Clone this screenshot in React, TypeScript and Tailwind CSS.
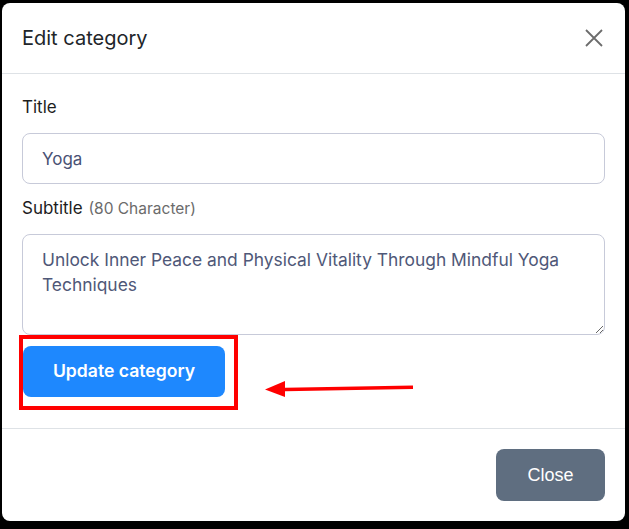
import React from "react";

export default function App() {
  return (
    <div className="w-[629px] h-[529px] bg-black pt-[3px] pl-[2px]" style={{ fontFamily: "Inter, 'Noto Sans', sans-serif" }}>
      <div className="relative w-[623px] h-[518px] bg-white rounded-[8px] flex flex-col">
        <div className="h-[71px] flex items-center justify-between pl-[20px] pr-[22px] border-b border-[#dee2e6] shrink-0">
          <h1 className="text-[20px] text-[#212529] leading-none">Edit category</h1>
          <svg width="18" height="18" viewBox="0 0 18 18" className="text-[#6c6c6c]">
            <path d="M1 1 L17 17 M17 1 L1 17" stroke="currentColor" strokeWidth="1.8" fill="none" />
          </svg>
        </div>
        <div className="px-[20px] pt-[21px] flex flex-col">
          <label className="text-[17px] leading-[24px] text-[#1d1d1d]">Title</label>
          <input
            readOnly
            value="Yoga"
            className="mt-[14px] h-[51px] w-full border border-[#c7cad9] rounded-[8px] px-[19px] text-[17px] text-[#4a5275] outline-none"
          />
          <label className="mt-[12px] text-[17px] leading-[24px] text-[#1d1d1d]">
            Subtitle <span className="ml-[1px] text-[15.5px] text-[#6b6b6b]">(80 Character)</span>
          </label>
          <textarea
            readOnly
            value="Unlock Inner Peace and Physical Vitality Through Mindful Yoga Techniques"
            className="mt-[13px] h-[101px] w-full border border-[#c7cad9] rounded-[8px] px-[19px] pt-[12px] text-[17.4px] leading-[25px] text-[#4f5878] outline-none"
          />
          <div className="mt-[11px]">
            <button className="ml-[1px] w-[202px] h-[51px] bg-[#1e88fe] rounded-[8px] text-white text-[17.6px] font-semibold">
              Update category
            </button>
          </div>
        </div>
        <div className="mt-auto h-[93px] border-t border-[#dee2e6] flex items-center justify-end pr-[20px]">
          <button
            className="w-[109px] h-[52px] bg-[#5f6e80] rounded-[8px] text-white text-[18px]"
            style={{ fontFamily: "'Liberation Sans', Arial, sans-serif" }}
          >
            Close
          </button>
        </div>
        <div className="absolute left-[17px] top-[332px] w-[219px] h-[75px] border-[4px] border-[#ff0000]" />
        <svg className="absolute left-[259px] top-[373px]" width="156" height="22" viewBox="0 0 156 22">
          <path d="M24 13.5 L152 11.2" stroke="#ff0000" strokeWidth="3.5" fill="none" />
          <path d="M4 13.5 L24 5 L24 21 Z" fill="#ff0000" />
        </svg>
      </div>
    </div>
  );
}
